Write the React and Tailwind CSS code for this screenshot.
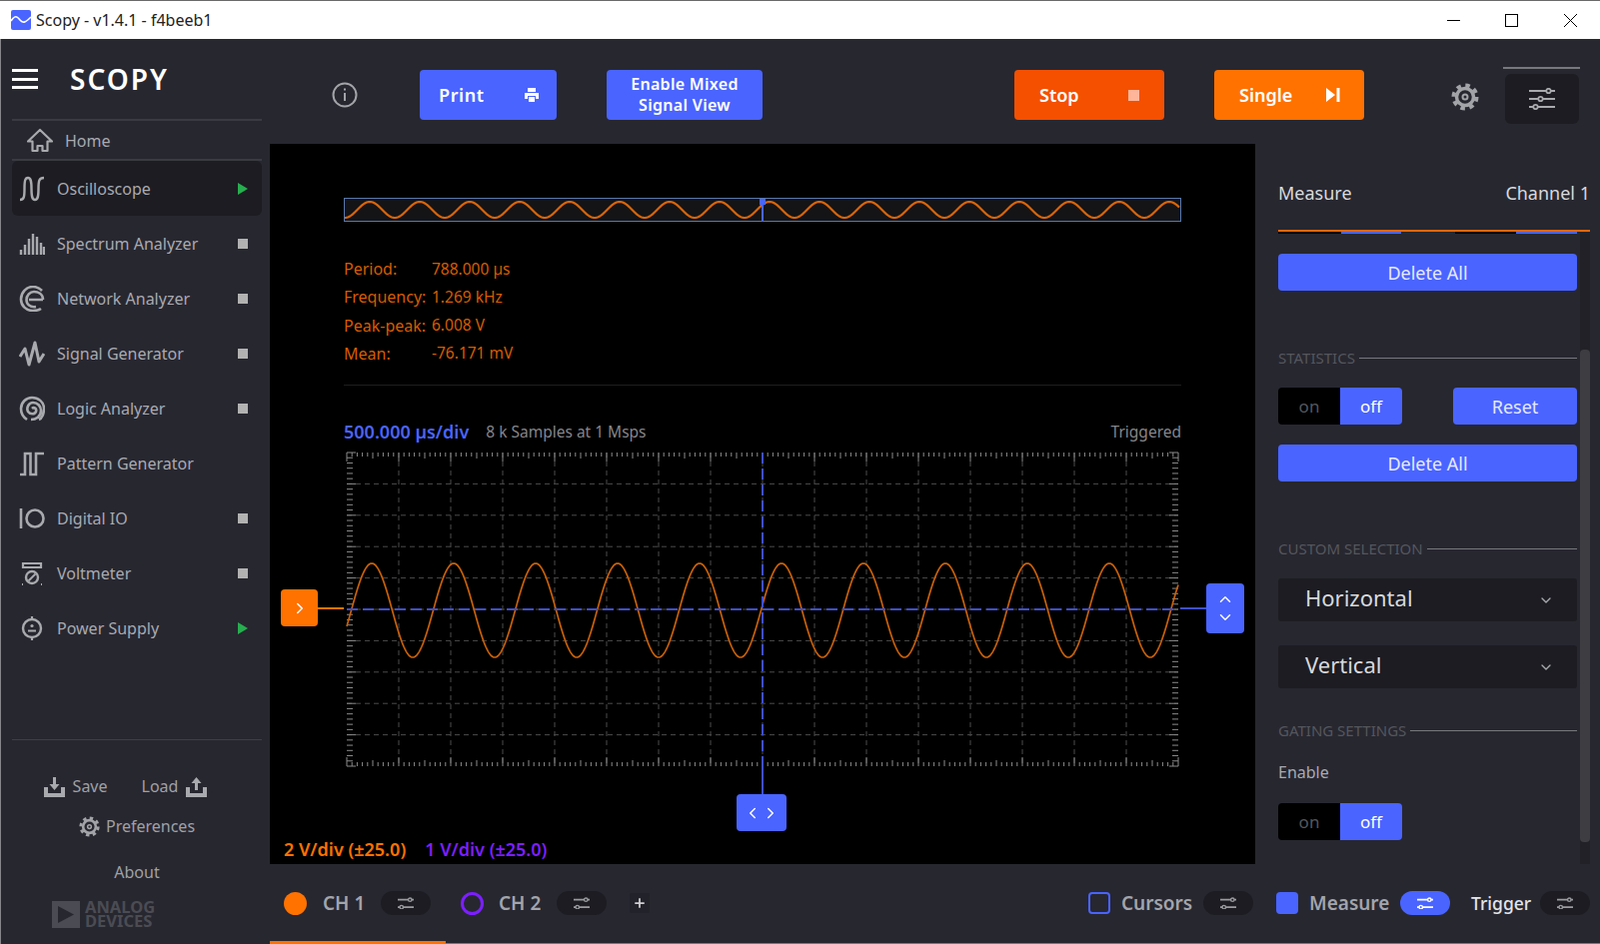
import React from "react";
import {ChevronDown, ChevronLeft, ChevronRight, ChevronUp, Plus} from "lucide-react";

// builds a sine polyline in svg coords
const sine = (x0, x1, peakX, period, mid, amp) => {
	let pts = [];
	for (let x = x0; x <= x1; x += 1) {
		const y = mid - amp * Math.cos((2 * Math.PI * (x - peakX)) / period);
		pts.push(`${x},${y.toFixed(2)}`);
	}
	return pts.join(" ");
};

const range = n => Array.from({length: n}, (_, i) => i);

const icons = {
	home: (
		<path d="M13 2 L25 13.5 L20.5 13.5 L20.5 23 L15.5 23 L15.5 18 L10.5 18 L10.5 23 L5.5 23 L5.5 13.5 L1 13.5 Z" strokeWidth="2.2" strokeLinejoin="round" />
	),
	scope: (
		<path strokeWidth="2.4" d="M1 24 C5 24 5.5 21 5.5 13 C5.5 5 6 2 9 2 C12 2 12.5 6 12.5 13 C12.5 20 13 24 16 24 C19 24 19.5 20 19.5 13 C19.5 5 20 2 25 2" />
	),
	spectrum: (
		<path strokeWidth="2.4" d="M2 24 V19 M6 24 V14 M10 24 V8 M14 24 V3 M18 24 V6 M22 24 V12 M25 24 V16" />
	),
	network: (
		<path strokeWidth="2.6" d="M24 14 H10 M24 14 C24 8 19 6 15 6 C11 6 7.5 9.5 7.5 14 C7.5 18.5 11 22 17 21 M23 5 C20 2 17 1 14 1 C7 1 2 7 2 13.5 C2 20 7 25 14 25 C17 25 20 24.5 22 23" />
	),
	signal: (
		<path strokeWidth="3" d="M1 16 L6 8 L10 24 L16 2 L20 21 L25 13" strokeLinejoin="round" />
	),
	logic: (
		<path strokeWidth="2.6" d="M13 13 C15 11 18 13 17 16 C16 19 11 19 9 16 C7 12 10 7 14 7 C19 7 22 11 22 15 C22 21 17 24 12 24 M20 24 C23 23 25 18 25 13 C25 6 19 2 13 2 C7 2 2 7 2 13 C2 18 5 22 8 24" />
	),
	pattern: (
		<path strokeWidth="2.6" d="M1 24 H6 V3 H11.5 V24 H17 V3 H25" strokeLinejoin="miter" />
	),
	io: (
		<>
			<path strokeWidth="2.6" d="M2 3 V23" />
			<circle cx="16" cy="13" r="8.5" strokeWidth="2.6" />
		</>
	),
	volt: (
		<>
			<path strokeWidth="2.2" d="M4 3 H22 V7 H4 Z" />
			<circle cx="13" cy="17" r="6" strokeWidth="2.4" />
			<path strokeWidth="2" d="M9.5 20.5 L16.5 13.5 M3 24 H4 M22 24 H23" />
		</>
	),
	power: (
		<>
			<circle cx="13" cy="13" r="9" strokeWidth="2.4" />
			<circle cx="13" cy="10.5" r="1.6" fill="currentColor" stroke="none" />
			<path strokeWidth="2.2" d="M9 15.5 H17 M13 1 V4 M13 22 V25" />
		</>
	),
};

const NavIcon = ({name}) => (
	<svg width="26" height="26" viewBox="0 0 26 26" fill="none" stroke="currentColor" strokeWidth="2" className="shrink-0 text-[#a9aaae]">
		{icons[name]}
	</svg>
);

const tools = [
	{name: "Oscilloscope", icon: "scope", state: "run", active: true},
	{name: "Spectrum Analyzer", icon: "spectrum", state: "stop"},
	{name: "Network Analyzer", icon: "network", state: "stop"},
	{name: "Signal Generator", icon: "signal", state: "stop"},
	{name: "Logic Analyzer", icon: "logic", state: "stop"},
	{name: "Pattern Generator", icon: "pattern"},
	{name: "Digital IO", icon: "io", state: "stop"},
	{name: "Voltmeter", icon: "volt", state: "stop"},
	{name: "Power Supply", icon: "power", state: "run"},
];

const ToolRow = ({tool}) => (
	<div className={`flex h-[55px] w-[250px] items-center pl-[7px] pr-[14px] rounded-md text-[16px] text-[#a9aab0] ${tool.active ? "bg-[#1c1c22]" : ""}`}>
		<NavIcon name={tool.icon} />
		<span className="ml-[12px] flex-1 whitespace-nowrap">{tool.name}</span>
		{tool.state === "stop" && <span className="h-[10px] w-[10px] bg-[#b2b2b2]" />}
		{tool.state === "run" && (
			<svg width="10" height="12" viewBox="0 0 10 12">
				<path d="M0 0 L10 6 L0 12 Z" fill="#27ae4f" />
			</svg>
		)}
	</div>
);

const Sidebar = () => (
	<aside className="flex w-[270px] shrink-0 flex-col border-l border-[#85858a] bg-[#272730] pl-[11px]">
		<div className="flex h-[80px] items-center">
			<div className="flex w-[26px] flex-col gap-[5.5px]">
				<span className="h-[3px] bg-white" />
				<span className="h-[3px] bg-white" />
				<span className="h-[3px] bg-white" />
			</div>
			<span className="ml-[32px] text-[28px] font-semibold leading-none tracking-[2px] text-white">SCOPY</span>
		</div>
		<div className="flex h-[42px] w-[250px] items-center border-y-2 border-[#3a3a42] pl-[15px] pt-px text-[16px] text-[#a9aab0]">
			<NavIcon name="home" />
			<span className="ml-[12px]">Home</span>
		</div>
		{tools.map(t => (
			<ToolRow key={t.name} tool={t} />
		))}
		<div className="mt-auto w-[250px] border-t border-[#3f3f46] pb-[16px] pt-[34px] text-[16px] text-[#a0a1a6]">
			<div className="flex items-center justify-center gap-[34px] pr-[23px]">
				<span className="flex items-center gap-[8px]">
					<svg width="21" height="21" viewBox="0 0 21 21" fill="#a9aaae">
						<path d="M0 11 H4 V17 H17 V11 H21 V21 H0 Z M9 1 H12 V8 H15.5 L10.5 14 L5.5 8 H9 Z" />
					</svg>
					Save
				</span>
				<span className="flex items-center gap-[8px]">
					Load
					<svg width="21" height="21" viewBox="0 0 21 21" fill="#a9aaae">
						<path d="M0 11 H4 V17 H17 V11 H21 V21 H0 Z M9 14 H12 V7 H15.5 L10.5 1 L5.5 7 H9 Z" />
					</svg>
				</span>
			</div>
			<div className="mt-[16px] flex items-center justify-center gap-[6px]">
				<Gear size={21} />
				Preferences
			</div>
			<div className="mt-[22px] text-center">About</div>
			<div className="ml-[40px] mt-[16px] flex items-center gap-[5px] text-[#4b4c53]">
				<svg width="28" height="27" viewBox="0 0 28 27">
					<path d="M0 0 H28 V27 H0 Z" fill="#4b4c53" />
					<path d="M6 5 L22 13.5 L6 22 Z" fill="#272730" />
				</svg>
				<div className="font-['Liberation_Sans',sans-serif] text-[16.5px] font-bold leading-[14px]">
					ANALOG
					<br />
					DEVICES
				</div>
			</div>
		</div>
	</aside>
);

const Gear = ({size}) => (
	<svg width={size} height={size} viewBox="0 0 28 28" fill="none" stroke="#a3a4a8" className="shrink-0">
		<circle cx="14" cy="14" r="8.5" strokeWidth="3.5" />
		<circle cx="14" cy="14" r="11.5" strokeWidth="4" strokeDasharray="4.5 4.53" />
		<circle cx="14" cy="14" r="2.5" strokeWidth="2" />
	</svg>
);

const Sliders = ({size = 16, color = "#9a9ba0"}) => (
	<svg width={size} height={size * 0.8} viewBox="0 0 15 12" fill="none" stroke={color} strokeWidth="1.3">
		<path d="M0 2.5 H10 M13 2.5 H15 M0 9.5 H2 M5 9.5 H15" strokeWidth="1.6" />
		<circle cx="11.5" cy="2.5" r="1.6" />
		<circle cx="3.5" cy="9.5" r="1.6" />
	</svg>
);

const Pill = ({on}) => (
	<div className={`flex h-[24px] w-[50px] shrink-0 items-center justify-center rounded-full ${on ? "bg-[#4a64ff]" : "bg-[#1c1c22]"}`}>
		<Sliders color={on ? "#ffffff" : "#9a9ba0"} />
	</div>
);

const Toolbar = () => (
	<div className="flex h-[105px] shrink-0 items-center bg-[#272730] pt-[7px] text-white">
		<svg width="26" height="26" viewBox="0 0 26 26" fill="none" stroke="#a3a4a8" strokeWidth="2" className="ml-[62px]">
			<circle cx="13" cy="13" r="11.5" />
			<path d="M13 11 V19 M13 6.5 V8.5" />
		</svg>
		<button className="ml-[62px] flex h-[50px] w-[137px] items-center justify-between rounded-[4px] bg-[#4a64ff] pl-[19px] pr-[18px] text-[18px] font-semibold tracking-[0.6px]">
			Print
			<svg width="14" height="14" viewBox="0 0 14 14" fill="#fff">
				<path d="M3 0 H11 V4 H3 Z M0 5 H14 V11 H11 V8 H3 V11 H0 Z M4 9 H10 V14 H4 Z" />
			</svg>
		</button>
		<button className="ml-[50px] h-[50px] w-[156px] rounded-[4px] bg-[#4a64ff] text-[16px] font-semibold leading-[21px] tracking-[0.3px]">
			Enable Mixed
			<br />
			Signal View
		</button>
		<button className="ml-[252px] flex h-[50px] w-[150px] items-center justify-between rounded-[4px] bg-[#f45000] pl-[25px] pr-[25px] text-[18px] font-semibold">
			Stop
			<span className="h-[11px] w-[11px] bg-[#ffb599]" />
		</button>
		<button className="ml-[50px] flex h-[50px] w-[150px] items-center justify-between rounded-[4px] bg-[#ff7200] pl-[25px] pr-[24px] text-[18px] font-semibold">
			Single
			<svg width="14" height="14" viewBox="0 0 14 14" fill="#fff">
				<path d="M0 0 L9 7 L0 14 Z M10.5 0 H13.5 V14 H10.5 Z" />
			</svg>
		</button>
		<div className="ml-[87px] mt-[4px]">
			<Gear size={28} />
		</div>
		<div className="ml-[24px] flex w-[77px] flex-col items-center">
			<span className="h-[2px] w-[77px] bg-[#77787d]" />
			<div className="mt-[5px] flex h-[50px] w-[74px] items-center justify-center rounded-md bg-[#1c1c22]">
				<svg width="26" height="22" viewBox="0 0 26 22" fill="none" stroke="#a9aaae" strokeWidth="1.8">
					<path d="M0 3 H17 M22 3 H26 M0 11 H9 M14 11 H26 M0 19 H4 M9 19 H26" />
					<circle cx="19.5" cy="3" r="2.2" />
					<circle cx="11.5" cy="11" r="2.2" />
					<circle cx="6.5" cy="19" r="2.2" />
				</svg>
			</div>
		</div>
	</div>
);

const measurements = [
	["Period:", "788.000 µs"],
	["Frequency:", "1.269 kHz"],
	["Peak-peak:", "6.008 V"],
	["Mean:", "-76.171 mV"],
];

// local svg coords: plot origin is at 3,8 and one div is 52 x 31.4
const Graticule = () => {
	const L = 3, T = 8, W = 832, H = 314;
	const dx = W / 16, dy = H / 10;
	return (
		<svg width="841" height="330" viewBox="0 0 841 330" className="block">
			{range(15).map(i => (
				<path key={i} d={`M${L + dx * (i + 1)} ${T} V${T + H}`} stroke="#4c4c4c" strokeDasharray="5 4" />
			))}
			{range(9).map(i => (
				<path key={i} d={`M${L} ${T + dy * (i + 1)} H${L + W}`} stroke="#4c4c4c" strokeDasharray="5 4" />
			))}
			{range(16 * 10 + 1).map(i => {
				const x = L + (dx / 10) * i;
				const len = i % 10 === 0 ? 9 : i % 5 === 0 ? 6 : 4;
				return <path key={i} d={`M${x} ${T} v${len} M${x} ${T + H} v${-len}`} stroke="#8c8c8c" />;
			})}
			{range(10 * 6 + 1).map(i => {
				const y = T + (dy / 6) * i;
				const len = i % 6 === 0 ? 9 : 6;
				return <path key={i} d={`M${L} ${y} h${len} M${L + W} ${y} h${-len}`} stroke="#8c8c8c" />;
			})}
			<polyline points={sine(3, 835, 28, 82, 166, 47)} fill="none" stroke="#c9610a" strokeWidth="1.7" />
			<path d={`M${L} 165 H${L + W}`} stroke="#3f4fc8" strokeWidth="2" strokeDasharray="11 5" />
			<path d={`M${L + W / 2} ${T} V${T + H}`} stroke="#3f4fc8" strokeWidth="2" strokeDasharray="11 5" />
		</svg>
	);
};

const Plot = () => (
	<div className="relative flex flex-1 flex-col bg-black text-[15.5px]">
		<div className="ml-[74px] w-[838px] pt-[54px]">
			<svg width="838" height="24" viewBox="0 0 838 24" className="block">
				<rect x="0.5" y="0.5" width="837" height="23" fill="#141417" stroke="#5878ad" />
				<polyline points={sine(1, 836, 26, 50, 12, 8)} fill="none" stroke="#d9650a" strokeWidth="2.2" />
				<path d="M419 1 V24" stroke="#4a64ff" strokeWidth="2" />
				<rect x="416" y="1" width="6" height="6" fill="#4a64ff" />
			</svg>
			<div className="mt-[33px] text-[#d65c00]">
				{measurements.map(([k, v]) => (
					<div key={k} className="flex h-[28.25px] items-center">
						<span className="w-[88px] text-[16px]">{k}</span>
						<span>{v}</span>
					</div>
				))}
			</div>
			<div className="mt-[17px] h-px bg-[#1e1e1e]" />
			<div className="mt-[34px] flex h-[24px] items-center">
				<span className="text-[18px] font-semibold text-[#4a64ff]">500.000 µs/div</span>
				<span className="ml-[17px] pt-px text-[#85858a]">8 k Samples at 1 Msps</span>
				<span className="ml-auto pt-px text-[#85858a]">Triggered</span>
			</div>
			<div className="mt-px">
				<Graticule />
			</div>
		</div>
		<div className="mt-auto flex h-[28px] items-center pb-[2px] pl-[14px] text-[18px] font-semibold">
			<span className="text-[#ff7200]">2 V/div (±25.0)</span>
			<span className="ml-[19px] text-[#7c1fff]">1 V/div (±25.0)</span>
		</div>

		{/* channel and time handles sit on top of the plot */}
		<div className="absolute left-[11px] top-[446px] flex h-[37px] w-[37px] items-center justify-center rounded-[4px] bg-[#ff7200]">
			<ChevronRight size={18} color="#fff" strokeWidth={2} />
		</div>
		<div className="absolute left-[48px] top-[464px] h-[2px] w-[26px] bg-[#ff7200]" />
		<div className="absolute left-[911px] top-[464px] h-[2px] w-[26px] bg-[#3f4fc8]" />
		<div className="absolute left-[937px] top-[440px] flex h-[50px] w-[38px] flex-col items-center justify-center rounded-[4px] bg-[#4a64ff]">
			<ChevronUp size={18} color="#fff" strokeWidth={2} />
			<ChevronDown size={18} color="#fff" strokeWidth={2} />
		</div>
		<div className="absolute left-[492px] top-[622px] h-[29px] w-[2px] bg-[#3f4fc8]" />
		<div className="absolute left-[467px] top-[651px] flex h-[37px] w-[50px] items-center justify-center rounded-[4px] bg-[#4a64ff]">
			<ChevronLeft size={18} color="#fff" strokeWidth={2} />
			<ChevronRight size={18} color="#fff" strokeWidth={2} />
		</div>
	</div>
);

const SectionTitle = ({children, className}) => (
	<div className={`flex h-[20px] items-center text-[15px] text-[#55565c] ${className}`}>
		<span className="whitespace-nowrap pr-[4px]">{children}</span>
		<span className="h-px flex-1 bg-[#77787c]" />
	</div>
);

const Toggle = ({className = ""}) => (
	<div className={`flex h-[37px] w-[124px] overflow-hidden rounded-[4px] text-[17px] ${className}`}>
		<span className="flex w-[62px] items-center justify-center bg-black pt-px text-[#55565c]">on</span>
		<span className="flex w-[62px] items-center justify-center bg-[#4a64ff] pt-px text-white">off</span>
	</div>
);

const BlueBtn = ({children, className = ""}) => (
	<button className={`h-[37px] rounded-[4px] bg-[#4a64ff] pt-px text-[18px] text-[#e6e9ff] ${className}`}>{children}</button>
);

const Select = ({label, className = ""}) => (
	<div className={`flex h-[43px] items-center justify-between rounded-[3px] bg-[#1c1c22] pb-[4px] pl-[27px] pr-[23px] text-[22px] text-[#d8d9dc] ${className}`}>
		{label}
		<ChevronDown size={16} color="#a9aaae" strokeWidth={2} className="mt-[4px]" />
	</div>
);

const MeasurePanel = () => (
	<div className="relative w-[345px] shrink-0 bg-[#272730] pl-[23px] text-[#a9aab0]">
		<div className="absolute bottom-0 left-[325px] top-[89px] w-[10px] bg-[#212127]">
			<div className="absolute bottom-[22px] left-0 top-[117px] w-full rounded-[4px] bg-[#3d3d42]" />
		</div>
		<div className="relative w-[312px] pt-[37px]">
			<div className="flex h-[24px] items-center justify-between text-[18px] text-[#d8d9dc]">
				<span>Measure</span>
				<span>Channel 1</span>
			</div>
			<div className="mt-[25px] h-[2px] bg-[#e8660a]" />
			<div className="flex h-[2px] w-[299px]">
				<span className="w-[63px] bg-black" />
				<span className="w-[60px] bg-[#4a64ff]" />
				<span className="ml-[54px] w-[61px] bg-black" />
				<span className="w-[61px] bg-[#4a64ff]" />
			</div>
		</div>
		<div className="relative flex w-[299px] flex-col">
			<BlueBtn className="mt-[20px] w-full">Delete All</BlueBtn>
			<SectionTitle className="mt-[57px]">STATISTICS</SectionTitle>
			<div className="mt-[20px] flex justify-between">
				<Toggle />
				<BlueBtn className="w-[124px]">Reset</BlueBtn>
			</div>
			<BlueBtn className="mt-[20px] w-full">Delete All</BlueBtn>
			<SectionTitle className="mt-[57px]">CUSTOM SELECTION</SectionTitle>
			<Select className="mt-[20px]" label="Horizontal" />
			<Select className="mt-[24px]" label="Vertical" />
			<SectionTitle className="mt-[32px]">GATING SETTINGS</SectionTitle>
			<div className="mt-[22px] flex h-[20px] items-center text-[16px]">Enable</div>
			<Toggle className="mt-[21px]" />
		</div>
	</div>
);

const Footer = () => (
	<div className="flex h-[80px] shrink-0 flex-col bg-[#272730]">
		<div className="flex flex-1 items-center pt-px text-[19px] font-semibold text-[#a2a5ac]">
			<span className="ml-[14px] h-[23px] w-[23px] rounded-full bg-[#ff7200]" />
			<span className="ml-[16px] w-[43px] whitespace-nowrap">CH 1</span>
			<div className="ml-[15px]"><Pill /></div>
			<span className="ml-[30px] h-[23px] w-[23px] rounded-full border-[3px] border-[#7c1fff]" />
			<span className="ml-[15px] w-[43px] whitespace-nowrap">CH 2</span>
			<div className="ml-[15px]"><Pill /></div>
			<div className="ml-[23px] flex h-[20px] w-[20px] items-center justify-center rounded-[2px] bg-[#22222a]">
				<Plus size={14} color="#d0d0d4" strokeWidth={3} />
			</div>
			<span className="ml-[439px] h-[22px] w-[22px] rounded-[4px] border-2 border-[#4a64ff]" />
			<span className="ml-[11px] w-[73px]">Cursors</span>
			<div className="ml-[9px]"><Pill /></div>
			<span className="ml-[23px] h-[22px] w-[22px] rounded-[4px] bg-[#4a64ff]" />
			<span className="ml-[11px] w-[81px]">Measure</span>
			<div className="ml-[10px]"><Pill on /></div>
			<span className="ml-[21px] w-[61px] text-[17.5px] font-medium text-[#e4e5e8]">Trigger</span>
			<div className="ml-[8px]"><Pill /></div>
		</div>
		<div className="flex h-[3px]">
			<span className="w-[176px] bg-[#ff7200]" />
			<span className="mt-[2px] h-px flex-1 bg-[#77787c]" />
		</div>
	</div>
);

const TitleBar = () => (
	<div className="flex h-[39px] shrink-0 items-center border-t border-[#6a6a6a] bg-white pl-[11px] text-[#222]">
		<svg width="20" height="20" viewBox="0 0 20 20">
			<rect width="20" height="20" rx="2" fill="#4a64ff" />
			<path d="M0 11 C4 5 6 6 9 10 C12 14 15 12 20 7" fill="none" stroke="#fff" strokeWidth="1.6" />
		</svg>
		<span className="ml-[5px] font-['Noto_Sans',sans-serif] text-[16px]">Scopy - v1.4.1 - f4beeb1</span>
		<div className="ml-auto flex items-center pr-[23px]">
			<span className="h-px w-[13px] bg-black" />
			<span className="ml-[45px] h-[13px] w-[13px] border border-black" />
			<svg width="13" height="13" viewBox="0 0 13 13" className="ml-[46px]" stroke="#000">
				<path d="M0 0 L13 13 M13 0 L0 13" />
			</svg>
		</div>
	</div>
);

const App = () => {
	return (
		<div className="flex h-[945px] w-[1601px] flex-col overflow-hidden bg-[#272730] font-['Open_Sans',sans-serif]">
			<TitleBar />
			<div className="flex min-h-0 flex-1">
				<Sidebar />
				<main className="flex min-w-0 flex-1 flex-col">
					<Toolbar />
					<div className="flex min-h-0 flex-1">
						<Plot />
						<MeasurePanel />
					</div>
					<Footer />
				</main>
			</div>
		</div>
	);
};

export default App;
